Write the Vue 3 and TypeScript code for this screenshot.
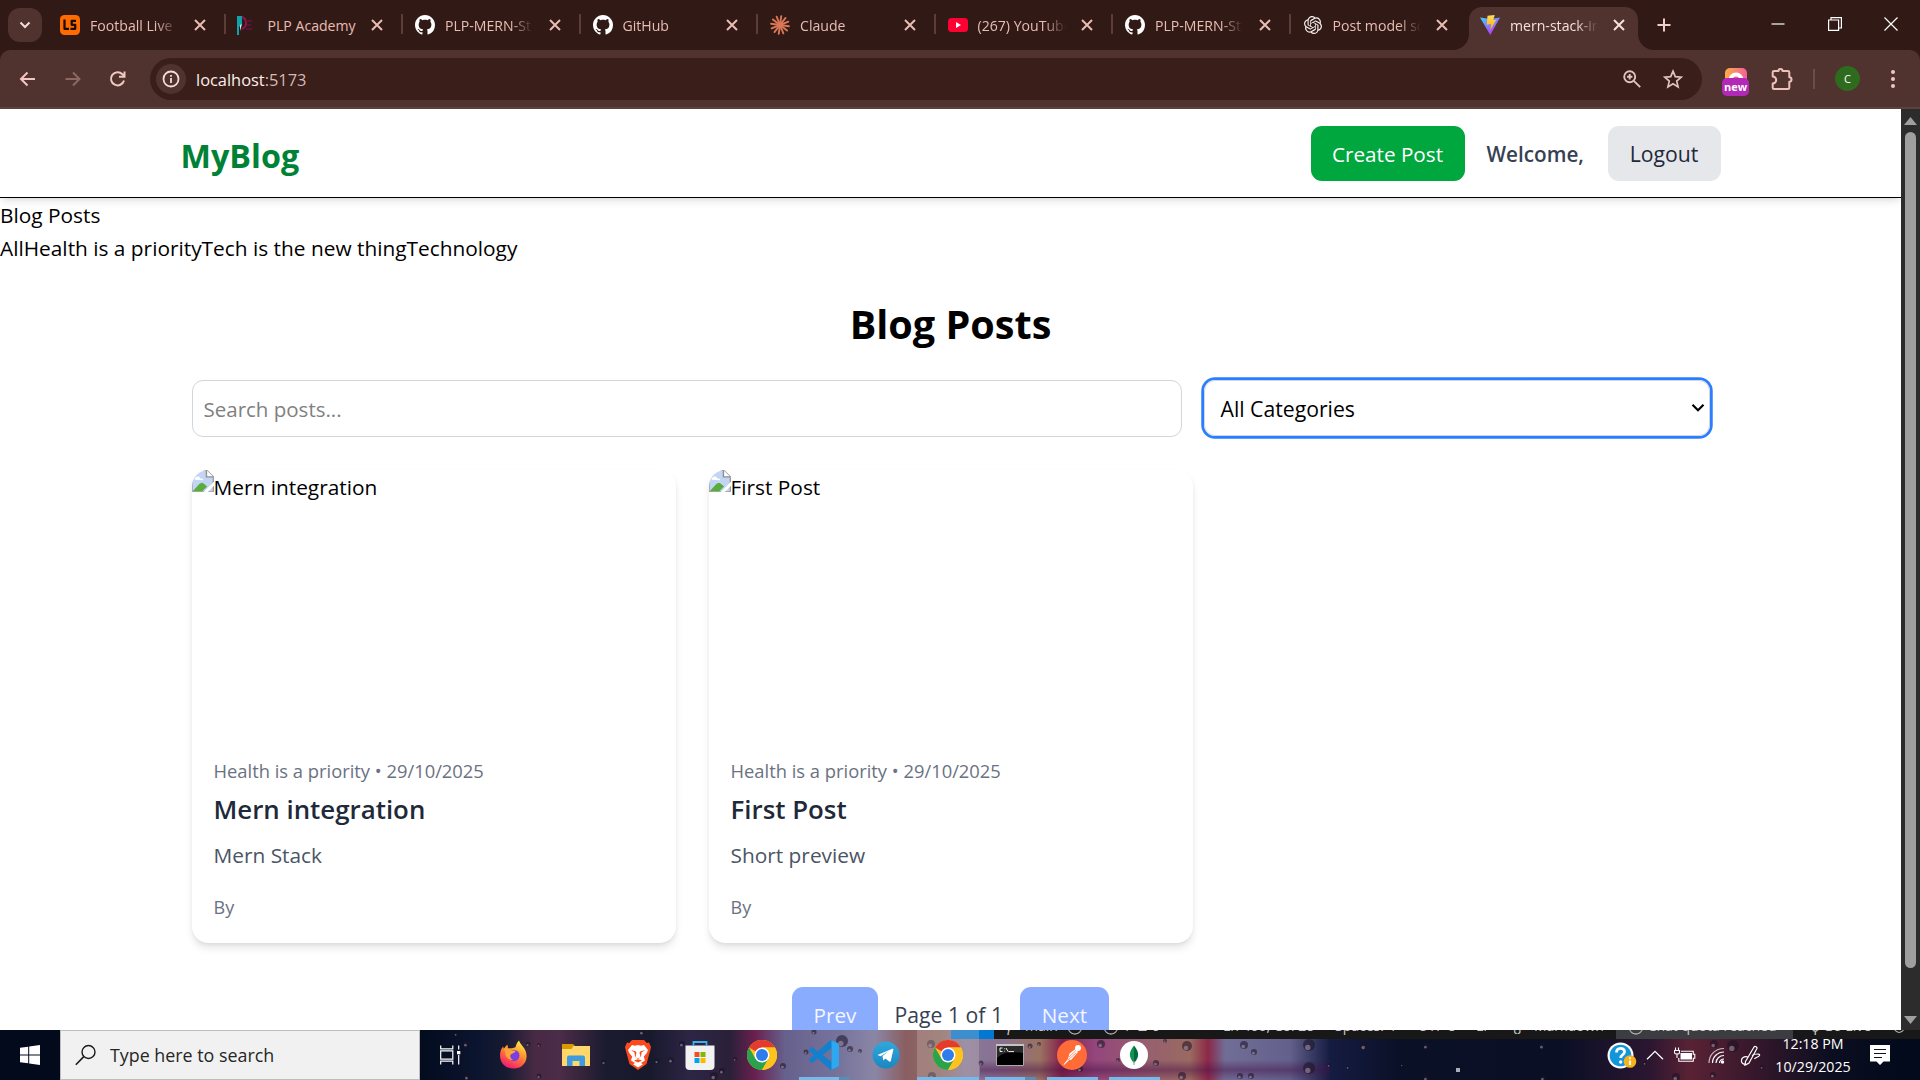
<script setup lang="ts">
interface Tab {
  icon: string
  title: string
  active?: boolean
}
interface Post {
  title: string
  category: string
  date: string
  excerpt: string
}
interface StatusItem {
  text: string
  width: number
  lit?: boolean
}
interface Dock {
  icon: string
  state?: 'open' | 'stacked' | 'current'
}

const tabs: Tab[] = [
  { icon: 'livescore', title: 'Football Live S' },
  { icon: 'plp', title: 'PLP Academy' },
  { icon: 'github', title: 'PLP-MERN-St' },
  { icon: 'github', title: 'GitHub' },
  { icon: 'claude', title: 'Claude' },
  { icon: 'youtube', title: '(267) YouTube' },
  { icon: 'github', title: 'PLP-MERN-St' },
  { icon: 'openai', title: 'Post model sch' },
  { icon: 'vite', title: 'mern-stack-int', active: true },
]

const posts: Post[] = [
  { title: 'Mern integration', category: 'Health is a priority', date: '29/10/2025', excerpt: 'Mern Stack' },
  { title: 'First Post', category: 'Health is a priority', date: '29/10/2025', excerpt: 'Short preview' },
]

const categories = ['All', 'Health is a priority', 'Tech is the new thing', 'Technology']

const statusItems: StatusItem[] = [
  { text: 'γ', width: 20 },
  { text: 'main', width: 42 },
  { text: '◯', width: 36 },
  { text: '◯ 1', width: 34 },
  { text: '⊔ 0', width: 86 },
  { text: 'Ln 406, Col 28', width: 112 },
  { text: 'Spaces: 4', width: 83 },
  { text: 'UTF-8', width: 58 },
  { text: 'LF', width: 36 },
  { text: '{}', width: 22 },
  { text: 'Markdown', width: 82 },
  { text: '◯ Chat quota reached', width: 177, lit: true },
  { text: '', width: 18 },
  { text: 'ϙ Go Live', width: 82 },
  { text: '◡', width: 20 },
]

const dock: Dock[] = [
  { icon: 'firefox' },
  { icon: 'explorer' },
  { icon: 'brave' },
  { icon: 'store' },
  { icon: 'chrome' },
  { icon: 'vscode', state: 'stacked' },
  { icon: 'telegram' },
  { icon: 'chrome', state: 'current' },
  { icon: 'cmd', state: 'stacked' },
  { icon: 'postman', state: 'open' },
  { icon: 'mongo', state: 'open' },
]

const rays = Array.from({ length: 12 }, (_, i) => i * 30 + 8)

/* Water drops scattered over the wallpaper: x, y, radius */
const drops: number[][] = [
  [456, 4, 2], [466, 14, 3], [467, 47, 3], [528, 14, 2.5], [539, 15, 2], [539, 46, 2.5], [604, 32, 2.5], [633, 14, 2],
  [642, 2, 3], [657, 31, 2.5], [671, 30, 3], [682, 14, 3], [714, 46, 4], [722, 41, 3], [735, 29, 2], [783, 36, 3],
  [806, 22, 2.5], [814, 2, 2.5], [842, 11, 6], [850, 19, 3], [860, 21, 2], [931, 14, 4], [932, 46, 4], [981, 33, 2.5],
  [1030, 16, 2.5], [1039, 14, 2], [1080, 39, 3], [1101, 14, 4], [1118, 30, 2], [1156, 33, 3], [1165, 11, 2], [1187, 16, 5],
  [1182, 46, 4], [1240, 46, 3], [1244, 15, 4], [1254, 22, 3], [1251, 46, 3], [1309, 15, 6], [1309, 38, 6], [1329, 35, 2],
  [1348, 37, 2], [1364, 16, 4], [1402, 35, 1.5], [1426, 16, 3], [1426, 48, 3], [1542, 16, 3], [1543, 48, 3], [1714, 14, 4],
  [1733, 16, 6], [1713, 45, 3], [1676, 47, 4], [1645, 33, 2], [1762, 37, 2],
]
</script>

<template>
  <div class="screen">
    <div class="strip">
      <div class="tab-search">
        <svg width="16" height="16" viewBox="0 0 16 16"><path d="M3.5 5.5 8 10l4.500-4.500" fill="none" stroke="#f3dcd7" stroke-width="2" /></svg>
      </div>
      <div v-for="(tab, i) in tabs" :key="i" class="tab" :class="{ active: tab.active, beforeactive: i === tabs.length - 2 }">
        <span class="favicon">
          <svg v-if="tab.icon === 'livescore'" width="20" height="20" viewBox="0 0 20 20">
            <rect width="20" height="20" rx="4.500" fill="#ff6b00" />
            <path d="M4.500 4.500v9.300H9M16 5.800h-4.300v4h3.500v4h-4.700" fill="none" stroke="#1b0d05" stroke-width="2.300" stroke-linejoin="round" />
          </svg>
          <svg v-else-if="tab.icon === 'plp'" width="20" height="20" viewBox="0 0 20 20">
            <path d="M0 1h5v8l-3 3v8L0 20z" fill="#0fa3ac" />
            <path d="M3 10 5 9l-2 7z" fill="#d9e8e8" />
            <path d="M5 2c5 2 6 9 0 12" fill="none" stroke="#8f1450" stroke-width="2" />
            <path d="M9 6h6M10 10h4M9 14h6" stroke="#5c1238" stroke-width="2" />
          </svg>
          <svg v-else-if="tab.icon === 'github'" width="20" height="20" viewBox="0 0 16 16">
            <path fill="#fff" d="M8 0C3.58 0 0 3.58 0 8c0 3.54 2.29 6.53 5.47 7.59.4.07.55-.17.55-.38 0-.19-.01-.82-.01-1.49-2.01.37-2.53-.49-2.69-.94-.09-.23-.48-.94-.82-1.13-.28-.15-.68-.52-.01-.53.63-.01 1.08.58 1.23.82.72 1.21 1.87.87 2.33.66.07-.52.28-.87.51-1.07-1.78-.2-3.64-.89-3.64-3.95 0-.87.31-1.59.82-2.15-.08-.2-.36-1.02.08-2.12 0 0 .67-.21 2.2.82.64-.18 1.32-.27 2-.27.68 0 1.36.09 2 .27 1.53-1.04 2.2-.82 2.2-.82.44 1.1.16 1.92.08 2.12.51.56.82 1.27.82 2.15 0 3.07-1.87 3.75-3.65 3.95.29.25.54.73.54 1.48 0 1.07-.01 1.93-.01 2.2 0 .21.15.46.55.38A8.013 8.013 0 0016 8c0-4.42-3.58-8-8-8z" />
          </svg>
          <svg v-else-if="tab.icon === 'claude'" width="20" height="20" viewBox="0 0 20 20">
            <g stroke="#d97757" stroke-width="1.900" stroke-linecap="round">
              <path v-for="r in rays" :key="r" d="M10 10V1" :transform="`rotate(${r} 10 10)`" />
            </g>
          </svg>
          <svg v-else-if="tab.icon === 'youtube'" width="20" height="20" viewBox="0 0 20 20">
            <rect y="3" width="20" height="14" rx="3.500" fill="#ff0033" />
            <path d="M8 7v6l5-3z" fill="#fff" />
          </svg>
          <svg v-else-if="tab.icon === 'openai'" width="18" height="18" viewBox="0 0 24 24">
            <path fill="#f4eeec" d="M22.2819 9.8211a5.9847 5.9847 0 0 0-.5157-4.9108 6.0462 6.0462 0 0 0-6.5098-2.9A6.0651 6.0651 0 0 0 4.9807 4.1818a5.9847 5.9847 0 0 0-3.9977 2.9 6.0462 6.0462 0 0 0 .7427 7.0966 5.98 5.98 0 0 0 .511 4.9107 6.051 6.051 0 0 0 6.5146 2.9001A5.9847 5.9847 0 0 0 13.2599 24a6.0557 6.0557 0 0 0 5.7718-4.2058 5.9894 5.9894 0 0 0 3.9977-2.9001 6.0557 6.0557 0 0 0-.7475-7.0729zm-9.022 12.6081a4.4755 4.4755 0 0 1-2.8764-1.0408l.1419-.0804 4.7783-2.7582a.7948.7948 0 0 0 .3927-.6813v-6.7369l2.02 1.1686a.071.071 0 0 1 .038.052v5.5826a4.504 4.504 0 0 1-4.4945 4.4944zm-9.6607-4.1254a4.4708 4.4708 0 0 1-.5346-3.0137l.142.0852 4.783 2.7582a.7712.7712 0 0 0 .7806 0l5.8428-3.3685v2.3324a.0804.0804 0 0 1-.0332.0615L9.74 19.9502a4.4992 4.4992 0 0 1-6.1408-1.6464zM2.3408 7.8956a4.485 4.485 0 0 1 2.3655-1.9728V11.6a.7664.7664 0 0 0 .3879.6765l5.8144 3.3543-2.0201 1.1685a.0757.0757 0 0 1-.071 0l-4.8303-2.7865A4.504 4.504 0 0 1 2.3408 7.872zm16.5963 3.8558L13.1038 8.364 15.1192 7.2a.0757.0757 0 0 1 .071 0l4.8303 2.7913a4.4944 4.4944 0 0 1-.6765 8.1042v-5.6772a.79.79 0 0 0-.407-.667zm2.0107-3.0231l-.142-.0852-4.7735-2.7818a.7759.7759 0 0 0-.7854 0L9.409 9.2297V6.8974a.0662.0662 0 0 1 .0284-.0615l4.8303-2.7866a4.4992 4.4992 0 0 1 6.6802 4.66zM8.3065 12.863l-2.02-1.1638a.0804.0804 0 0 1-.038-.0567V6.0742a4.4992 4.4992 0 0 1 7.3757-3.4537l-.142.0805L8.704 5.459a.7948.7948 0 0 0-.3927.6813zm1.0976-2.3654l2.602-1.4998 2.6069 1.4998v2.9994l-2.5974 1.4997-2.6067-1.4997Z" />
          </svg>
          <svg v-else width="20" height="20" viewBox="0 0 20 20">
            <defs>
              <linearGradient id="vg" x1="0" y1="0" x2=".6" y2="1"><stop offset="0" stop-color="#41d1ff" /><stop offset="1" stop-color="#bd34fe" /></linearGradient>
              <linearGradient id="vb" x1="0" y1="0" x2="0" y2="1"><stop offset="0" stop-color="#ffdf5c" /><stop offset="1" stop-color="#ffa800" /></linearGradient>
            </defs>
            <path d="M0 2.500 10 4l10-1.500L10.300 20z" fill="url(#vg)" />
            <path d="M7.500.8 14.700 0l-1.500 5.200 3-.5-5.800 10.500.6-6.200-4.200.8z" fill="url(#vb)" />
          </svg>
        </span>
        <span class="tab-title">{{ tab.title }}</span>
        <svg class="tab-close" width="14" height="14" viewBox="0 0 14 14"><path d="m2 2 10 10M12 2 2 12" stroke="currentColor" stroke-width="2" /></svg>
        <svg v-if="tab.active" class="flare left" width="16" height="16" viewBox="0 0 16 16"><path d="M16 0v16H0A16 16 0 0 0 16 0z" fill="#50332e" /></svg>
        <svg v-if="tab.active" class="flare right" width="16" height="16" viewBox="0 0 16 16"><path d="M0 0v16h16A16 16 0 0 1 0 0z" fill="#50332e" /></svg>
      </div>
      <svg class="new-tab" width="14" height="14" viewBox="0 0 14 14"><path d="M7 .5v13M.5 7h13" stroke="#f1cfc8" stroke-width="2" /></svg>
      <div class="window-buttons">
        <svg width="14" height="14" viewBox="0 0 14 14"><path d="M.5 7h13" stroke="#fff" stroke-width="1.200" /></svg>
        <svg width="14" height="14" viewBox="0 0 14 14"><path d="M.6 3h10v10.400H.6zM3 3V.6h10.400V11H10.600" fill="none" stroke="#fff" stroke-width="1.200" /></svg>
        <svg width="14" height="14" viewBox="0 0 14 14"><path d="m.5.500 13 13M13.500.500l-13 13" stroke="#fff" stroke-width="1.200" /></svg>
      </div>
    </div>

    <div class="toolbar">
      <div class="nav">
        <svg width="20" height="20" viewBox="0 0 20 20"><path d="M17 10H3M9.500 3.500 3 10l6.500 6.500" fill="none" stroke="#f1c7c0" stroke-width="2" /></svg>
        <svg width="20" height="20" viewBox="0 0 20 20"><path d="M2.500 10h14M10 3.500l6.500 6.500-6.500 6.500" fill="none" stroke="#8d6761" stroke-width="2" /></svg>
        <svg width="20" height="20" viewBox="0 0 20 20"><path d="M16 11.500A6.600 6.600 0 1 1 14.400 5.200L16 7M16.500 2.500v5.300H11" fill="none" stroke="#f1c7c0" stroke-width="2" /></svg>
      </div>
      <div class="omnibox">
        <span class="site-info">
          <svg width="18" height="18" viewBox="0 0 18 18"><circle cx="9" cy="9" r="7.500" fill="none" stroke="#f3dcd7" stroke-width="1.800" /><path d="M9 8v5M9 5v1.800" stroke="#f3dcd7" stroke-width="1.800" /></svg>
        </span>
        <span class="url"><b>localhost</b>:5173</span>
        <svg class="magnifier" width="20" height="20" viewBox="0 0 20 20"><circle cx="7.700" cy="7.700" r="5.500" fill="none" stroke="#dfc3bd" stroke-width="1.900" /><path d="m11.800 11.800 6.400 6.400M7.700 5v5.400M5 7.700h5.400" stroke="#dfc3bd" stroke-width="1.900" /></svg>
        <svg class="star" width="20" height="20" viewBox="0 0 20 20"><path d="m10 2.200 2.300 5.500 5.900.5-4.500 3.900 1.400 5.800L10 14.800l-5.100 3.100 1.400-5.800-4.500-3.900 5.900-.5z" fill="none" stroke="#dfc3bd" stroke-width="1.700" /></svg>
      </div>
      <div class="extension">
        <svg width="22" height="12" viewBox="0 0 22 12">
          <defs><linearGradient id="eg" x1="0" y1="0" x2="1" y2="0"><stop offset="0" stop-color="#fbb040" /><stop offset="1" stop-color="#f2609e" /></linearGradient></defs>
          <rect width="22" height="20" rx="5" fill="url(#eg)" /><path d="M3.500 12a7.500 7.500 0 0 1 15 0z" fill="#fff" /><path d="M7.500 12a3.500 3.500 0 0 1 7 0z" fill="#e96a86" />
        </svg>
        <span>new</span>
      </div>
      <svg class="puzzle" width="24" height="26" viewBox="0 0 24 26"><path d="M4 5h4.500a2 2 0 0 1 4 0H18q1.300 0 1.300 1.300V11.300a2.200 2.200 0 0 1 0 4.400V21.700q0 1.300-1.300 1.300H4q-1.300 0-1.300-1.300V17.500a3.500 3.500 0 0 0 0-7V6.300Q2.700 5 4 5z" fill="none" stroke="#edc2ba" stroke-width="2" stroke-linejoin="round" /></svg>
      <span class="divider"></span>
      <span class="avatar">C</span>
      <svg class="menu" width="6" height="24" viewBox="0 0 6 24"><g fill="#f1c7c0"><circle cx="3" cy="5" r="2" /><circle cx="3" cy="12" r="2" /><circle cx="3" cy="19" r="2" /></g></svg>
    </div>

    <div class="viewport">
      <div class="page">
        <header class="site-header">
          <div class="site-inner">
            <span class="brand">MyBlog</span>
            <button class="btn create">Create Post</button>
            <span class="welcome">Welcome,</span>
            <button class="btn logout">Logout</button>
          </div>
        </header>
        <div class="plain">Blog Posts</div>
        <div class="plain cats"><span v-for="c in categories" :key="c">{{ c }}</span></div>
        <main class="content">
          <h1>Blog Posts</h1>
          <div class="filters">
            <input class="search" type="text" placeholder="Search posts..." />
            <div class="select">
              <span>All Categories</span>
              <svg width="14" height="10" viewBox="0 0 14 10"><path d="m1.500 1.800 5.500 5.500 5.500-5.500" fill="none" stroke="#000" stroke-width="2.200" /></svg>
            </div>
          </div>
          <div class="grid">
            <article v-for="p in posts" :key="p.title" class="card">
              <div class="picture">
                <svg width="22" height="22" viewBox="0 0 16 16">
                  <path d="M1 0h9.500L15.500 5v11H0V1z" fill="#c3d5f5" stroke="#a0a0a0" />
                  <path d="M10.500 0v5h5" fill="#fff" stroke="#8e8e8e" />
                  <path d="M2 7c.2-2.500 3.500-3 4-.8C8 5.800 8.400 7 8 7.500z" fill="#fff" />
                  <path d="M.5 15.500 5 10.500c1.500-1.400 3-1.400 4.500.2L11 12l-3.500 3.500z" fill="#5aad3a" />
                  <path d="m8 16.500 8.500-8.500v3L11 16.500z" fill="#fff" />
                </svg><span>{{ p.title }}</span>
              </div>
              <div class="card-body">
                <p class="meta">{{ p.category }} • {{ p.date }}</p>
                <h2>{{ p.title }}</h2>
                <p class="excerpt">{{ p.excerpt }}</p>
                <p class="by">By</p>
              </div>
            </article>
          </div>
          <div class="pager">
            <button class="btn page-btn">Prev</button>
            <span class="page-label">Page 1 of 1</span>
            <button class="btn page-btn">Next</button>
          </div>
        </main>
      </div>
      <div class="scrollbar">
        <svg width="13" height="8" viewBox="0 0 13 8"><path d="M6.500 0 13 8H0z" fill="#9f9f9f" /></svg>
        <span class="thumb"></span>
        <svg class="down" width="13" height="8" viewBox="0 0 13 8"><path d="M0 0h13L6.500 8z" fill="#9f9f9f" /></svg>
      </div>
    </div>

    <div class="taskbar">
      <svg class="drops" width="1920" height="50" viewBox="0 0 1920 50">
        <g v-for="(d, i) in drops" :key="i">
          <circle :cx="d[0]" :cy="d[1]" :r="d[2]" fill="#1b1224" fill-opacity=".55" />
          <circle :cx="d[0] - d[2] * 0.2" :cy="d[1] + d[2] * 0.4" :r="d[2] * 0.45" fill="#b9a5bb" fill-opacity=".5" />
        </g>
        <rect x="1456" y="38" width="4" height="4" fill="#a9adb8" />
      </svg>
      <div class="status">
        <span class="remote"></span>
        <span v-for="(s, i) in statusItems" :key="i" class="status-item" :class="{ lit: s.lit }" :style="{ width: s.width + 'px' }">{{ s.text }}</span>
      </div>
      <div class="start">
        <svg width="20" height="20" viewBox="0 0 20 20"><path d="M0 2.800 8.200 1.700v7.700H0zM9.200 1.500 20 0v9.400H9.200zM0 10.400h8.200v7.900L0 17.200zM9.200 10.400H20V20L9.200 18.500z" fill="#fff" /></svg>
      </div>
      <div class="task-search">
        <svg width="22" height="22" viewBox="0 0 22 22"><circle cx="13.500" cy="8" r="6.500" fill="none" stroke="#1a1a1a" stroke-width="1.400" /><path d="m8.800 12.600-8 8.200" stroke="#1a1a1a" stroke-width="1.600" /></svg>
        <span>Type here to search</span>
      </div>
      <div class="cell taskview">
        <svg width="22" height="20" viewBox="0 0 22 20"><path d="M1.700.500v3.300h12.100V.500M1.700 19.500v-3.300h12.100v3.300M1.700 5.800h12.100v8.400H1.700zM19.700.500v4M19.700 10v9.500" fill="none" stroke="#fff" stroke-width="1.200" /><rect x="18" y="6" width="3.300" height="3.300" fill="#fff" /></svg>
      </div>
      <div v-for="(d, i) in dock" :key="i" class="cell" :class="d.state">
        <svg v-if="d.icon === 'firefox'" width="30" height="30" viewBox="0 0 30 30">
          <defs><linearGradient id="ff" x1=".8" y1="0" x2=".3" y2="1"><stop offset="0" stop-color="#fff44f" /><stop offset=".4" stop-color="#ff9a2e" /><stop offset=".75" stop-color="#ff4a4d" /><stop offset="1" stop-color="#e5197e" /></linearGradient></defs>
          <path d="M20 .5c.5 2.500 3 4.500 5 7.500 6 9 1 20.500-10 20.500S-.5 20 1.500 11.500C2 9.500 3 8 4 6.500l1 2.200c1-2 2-3 3.500-4l.5 3.500h4l3.500-1C17 5 18 2.500 20 .5z" fill="url(#ff)" />
          <circle cx="15" cy="15.500" r="5.500" fill="#7a3fe0" />
          <path d="M5 8.500c3-.5 5.500.5 7.500 2l4 .3c-.5 2.500-3.500 2.200-5 4.200-.8 2 .5 4 2.500 5-4 .5-8-3-7.500-7z" fill="#ffa436" />
        </svg>
        <svg v-else-if="d.icon === 'explorer'" width="28" height="24" viewBox="0 0 28 24">
          <path d="M0 1h11l3 3h-3L9 6H0z" fill="#d99a00" /><path d="M0 6h9l2.500-3H28v20H0z" fill="#ffd76b" /><path d="M5 23v-8.500a2 2 0 0 1 2-2h14a2 2 0 0 1 2 2V23h-5.500v-5h-7v5z" fill="#3d9be0" />
        </svg>
        <svg v-else-if="d.icon === 'brave'" width="26" height="30" viewBox="0 0 26 30">
          <path d="M7 0h12l2.800 3 2.200-.4L26 7l-.8 3.500L21.500 24 13 30 4.500 24 .8 10.500 0 7l2-4.400 2.200.4z" fill="#fb4a1d" />
          <path d="m7 5 3 .7 3-.8 3 .8L19 5l4 5-1.200 3-3 3.500 1.200 4-4 2.500 2 1.200-5 3.300-5-3.300 2-1.200-4-2.500 1.200-4-3-3.500L3 10z" fill="#fff" />
          <path d="m6 10 4.500 1.200 1 1.600-1.200 4.400 2.700 1 2.700-1-1.200-4.400 1-1.600L20 10l-3.500 2.500-.5 4.500-3 2-3-2-.5-4.500zM9 20.500l4-1.200 4 1.200-4 2z" fill="#fb4a1d" />
        </svg>
        <svg v-else-if="d.icon === 'store'" width="30" height="30" viewBox="0 0 30 30">
          <path d="M.5 5.500h29V26a4 4 0 0 1-4 4h-21a4 4 0 0 1-4-4z" fill="#f2f2f2" /><path d="M8.500 6V2h13v4" fill="none" stroke="#35b1ee" stroke-width="1.800" />
          <path d="M9.500 12h5v5h-5z" fill="#f04e24" /><path d="M15.500 12h5v5h-5z" fill="#80b900" /><path d="M9.500 18h5v5h-5z" fill="#00a3ee" /><path d="M15.500 18h5v5h-5z" fill="#ffb800" />
        </svg>
        <svg v-else-if="d.icon === 'chrome'" width="30" height="30" viewBox="0 0 30 30">
          <circle cx="15" cy="15" r="15" fill="#fcc31e" />
          <path d="M15 15 2 7.500A15 15 0 0 1 28 7.500H15z" fill="#e33b2e" />
          <path d="M2 7.500A15 15 0 0 0 15 30l6.500-11.200L8.500 18.700z" fill="#2ba24c" />
          <path d="M15 7.500h13A15 15 0 0 1 15 30l6.500-11.200z" fill="#fcc31e" />
          <circle cx="15" cy="15" r="7.500" fill="#fff" /><circle cx="15" cy="15" r="6" fill="#2f7ded" />
        </svg>
        <svg v-else-if="d.icon === 'vscode'" width="30" height="30" viewBox="0 0 24 24">
          <path fill="#1280cc" d="M23.15 2.587L18.21.21a1.494 1.494 0 0 0-1.705.29l-9.46 8.63-4.12-3.128a.999.999 0 0 0-1.276.057L.327 7.261A1 1 0 0 0 .326 8.74L3.899 12 .326 15.26a1 1 0 0 0 .001 1.479L1.65 17.94a.999.999 0 0 0 1.276.057l4.12-3.128 9.46 8.63a1.492 1.492 0 0 0 1.704.29l4.942-2.377A1.5 1.5 0 0 0 24 20.060V3.939a1.5 1.5 0 0 0-.85-1.352zm-5.146 14.861L10.826 12l7.178-5.448v10.896z" />
          <path fill="#2fa8f2" d="M18.004.2l5.146 2.387A1.500 1.500 0 0 1 24 3.940v16.120a1.500 1.500 0 0 1-.85 1.352L18.004 23.800z" />
        </svg>
        <svg v-else-if="d.icon === 'telegram'" width="28" height="28" viewBox="0 0 28 28">
          <defs><linearGradient id="tg" x1="0" y1="0" x2="0" y2="1"><stop offset="0" stop-color="#2fa8de" /><stop offset="1" stop-color="#1c86c0" /></linearGradient></defs>
          <circle cx="14" cy="14" r="13.500" fill="url(#tg)" /><path d="m5.500 14 14.800-6.200c.8-.2 1.200.2 1 1L18.800 20c-.2.800-.8 1-1.500.6l-4-3-2 2-.8-4.500L17 10l-8.500 5.200z" fill="#fff" />
        </svg>
        <svg v-else-if="d.icon === 'cmd'" width="28" height="22" viewBox="0 0 28 22">
          <path d="M.5.500h27v21H.5z" fill="#000" stroke="#a9a9a9" /><path d="M0 0h28v2H0z" fill="#c4c4c4" /><path d="M1 14c7-7 17-6 26-5V2H1z" fill="#2b2b2b" />
          <path d="M6.500 4H4v3.500h2.500M8.500 4.500v.6M8.500 6.800v.6M10 4l2 3.500M12.500 7.600H18" fill="none" stroke="#eee" stroke-width="1" />
        </svg>
        <svg v-else-if="d.icon === 'postman'" width="30" height="30" viewBox="0 0 30 30">
          <circle cx="15" cy="15" r="15" fill="#ff6c37" /><circle cx="21" cy="8" r="3" fill="#fff" /><path d="m18.500 9 2.500 3-7 8-1.500-.3-5.500 5.300-.5-.5 4.500-5.500 1.500-5.500z" fill="#fff" /><path d="m12 17 7-6.500M11 20l8-7" stroke="#ff6c37" stroke-width=".7" />
        </svg>
        <svg v-else width="28" height="28" viewBox="0 0 28 28">
          <circle cx="14" cy="14" r="14" fill="#fff" /><path d="M14 4.500c-5.500 6.500-5.500 12 0 17.500z" fill="#12924f" /><path d="M14 4.500c5.500 6.500 5.500 12 0 17.500z" fill="#016a43" /><path d="M14 20v4" stroke="#9aa8a0" stroke-width="1.200" />
        </svg>
        <span v-if="d.state" class="underline"></span>
      </div>
      <div class="tray">
        <svg class="help" width="30" height="28" viewBox="0 0 30 28">
          <circle cx="13.500" cy="13.500" r="13" fill="#fff" /><circle cx="13.500" cy="13.500" r="10.800" fill="#1296db" />
          <path d="M9.500 10.500c0-5.500 8-5.300 8-.7 0 3-3.800 3-3.800 6.200" fill="none" stroke="#fff" stroke-width="2.800" /><circle cx="13.700" cy="20" r="1.700" fill="#fff" />
          <circle cx="23" cy="19.500" r="6.300" fill="#f5b21c" /><path d="M23 18.500v4.500M23 15.300v1.800" stroke="#fff" stroke-width="1.800" />
        </svg>
        <svg class="up" width="18" height="10" viewBox="0 0 18 10"><path d="m1 9.300 8-8 8 8" fill="none" stroke="#fff" stroke-width="1.300" /></svg>
        <svg class="battery" width="22" height="16" viewBox="0 0 22 16"><path d="M6.500 6h11.500v6.500H6.500z" fill="#fff" /><path d="M7 4.300h12.300v3h1.500v4h-1.500v3H4.800V11M1.500.500v3M4.500.500v3M.5 3.500h5v2c0 2-5 2-5 0zM3 7v4" fill="none" stroke="#fff" stroke-width="1.100" /></svg>
        <svg class="wifi" width="17" height="17" viewBox="0 0 17 17"><g fill="none" stroke="#fff" stroke-width="1.200"><path d="M1 16C1 7.500 7.500 1.500 16 1.500" opacity=".7" /><path d="M4.500 16C4.500 10 9.500 5 16 5" /><path d="M8 16c0-4 3.500-7.500 8-7.500" /><path d="M11.500 16c0-2.200 2-4 4.500-4" /></g><circle cx="14.500" cy="15" r="1.700" fill="#fff" /></svg>
        <svg class="pen" width="21" height="21" viewBox="0 0 21 21"><path d="M5.500 16.500 14 2c1-1.500 3.700 0 2.800 1.800L9 18l-4 2.200zM8 12c-4-1-7 1-6.500 4.500S7.500 20 9 18M12 10.500c3-2 8.500-2 7.500 0-1 1.500-4.500 2-5 3.500" fill="none" stroke="#fff" stroke-width="1.200" /></svg>
        <div class="clock"><span>12:18 PM</span><span>10/29/2025</span></div>
        <svg class="notes" width="20" height="20" viewBox="0 0 20 20"><path d="M0 0h20v16.500h-6.500L10 20l-3.500-3.500H0z" fill="#fff" /><path d="M4 4.500h12M4 8.500h12M4 12.500h8" stroke="#0a1224" stroke-width="1.100" /></svg>
      </div>
    </div>
  </div>
</template>

<style>
body {
  margin: 0;
  overflow: hidden;
}
</style>

<style scoped>
* {
  box-sizing: border-box;
}
.screen {
  width: 1920px;
  height: 1080px;
  display: flex;
  flex-direction: column;
  overflow: hidden;
  background: #321a16;
  font-family: 'Open Sans', 'Noto Sans', sans-serif;
}
svg {
  display: block;
  flex: none;
}
p,
h1,
h2 {
  margin: 0;
}

/* Tab strip */
.strip {
  height: 50px;
  flex: none;
  display: flex;
  align-items: flex-start;
  background: #311a15;
}
.tab-search {
  width: 34px;
  height: 34px;
  margin: 8px 5px 0 8px;
  border-radius: 12px;
  background: #50332e;
  display: flex;
  align-items: center;
  justify-content: center;
}
.tab {
  position: relative;
  width: 177.500px;
  height: 36px;
  margin-top: 7px;
  display: flex;
  align-items: center;
  padding-left: 13px;
  color: #e9bcb4;
}
.tab:nth-child(3) .favicon {
  margin-left: -1px;
  margin-right: 1px;
}
.tab:not(.active):not(.beforeactive)::after {
  content: '';
  position: absolute;
  right: -1px;
  top: 7px;
  width: 2px;
  height: 20px;
  background: #5c3d37;
}
.tab.active {
  width: 169px;
  height: 43px;
  margin-left: 2px;
  padding: 0 0 7px 11px;
  background: #50332e;
  border-radius: 13px 13px 0 0;
  color: #f6e0dc;
}
.favicon {
  width: 20px;
  height: 20px;
  display: flex;
  align-items: center;
  justify-content: center;
}
.tab-title {
  width: 90px;
  margin-left: 10px;
  padding-top: 1px;
  font-size: 14.100px;
  line-height: 20px;
  white-space: nowrap;
  overflow: hidden;
  mask-image: linear-gradient(90deg, #000 66px, transparent 88px);
}
.tab:nth-child(3) .tab-title {
  mask-image: none;
}
.tab-close {
  margin-left: 12.500px;
}
.tab.active .tab-close {
  margin-left: 12px;
}
.flare {
  position: absolute;
  bottom: 0;
}
.flare.left {
  left: -16px;
}
.flare.right {
  right: -16px;
}
.new-tab {
  margin: 18px 0 0 19px;
}
.window-buttons {
  margin: 17px 22px 0 auto;
  display: flex;
  gap: 42.500px;
}

/* Toolbar */
.toolbar {
  height: 59px;
  flex: none;
  display: flex;
  align-items: center;
  background: #50332e;
  border-radius: 10px 10px 0 0;
  border-bottom: 2px solid #5a423e;
  padding-left: 18px;
}
.nav {
  width: 132px;
  display: flex;
  gap: 25px;
}
.omnibox {
  width: 1552px;
  height: 42px;
  border-radius: 21px;
  background: #391e1a;
  display: flex;
  align-items: center;
  padding-left: 6px;
}
.site-info {
  width: 30px;
  height: 30px;
  border-radius: 50%;
  background: #50332e;
  display: flex;
  align-items: center;
  justify-content: center;
}
.url {
  margin-left: 10px;
  padding-top: 1px;
  font-size: 16.400px;
  color: #d6bab5;
}
.url b {
  font-weight: 400;
  color: #fbeeeb;
}
.magnifier {
  margin-left: auto;
}
.star {
  margin: 0 19.500px 0 20.500px;
}
.extension {
  margin-left: 20px;
  width: 27px;
  display: flex;
  flex-direction: column;
  align-items: center;
  padding-top: 6px;
}
.extension span {
  width: 27px;
  height: 18px;
  border-radius: 5px;
  background: #b129b6;
  color: #fff;
  font-size: 11px;
  font-weight: 700;
  line-height: 18px;
  text-align: center;
  margin-top: -2px;
}
.puzzle {
  margin-left: 20.500px;
}
.divider {
  width: 2px;
  height: 20px;
  margin-left: 19.500px;
  background: #6f4d47;
}
.avatar {
  width: 25px;
  height: 25px;
  margin-left: 20px;
  border-radius: 50%;
  background: #2f6b1e;
  color: #fff;
  font-size: 11px;
  line-height: 25px;
  text-align: center;
}
.menu {
  margin-left: 29.500px;
}

/* Web page */
.viewport {
  height: 921px;
  flex: none;
  display: flex;
}
.page {
  width: 1901px;
  height: 921px;
  overflow: hidden;
  background: #fff;
  color: #000;
  font-size: 20.850px;
}
.site-header {
  height: 89px;
  border-bottom: 1px solid #000;
  box-shadow: 0 5.500px 8.250px -1.400px rgba(0, 0, 0, 0.1), 0 2.750px 5.500px -2.750px rgba(0, 0, 0, 0.1);
}
.site-inner {
  width: 1540px;
  height: 88px;
  margin: 0 auto;
  display: flex;
  align-items: center;
  gap: 22px;
}
.brand {
  margin-right: auto;
  padding-top: 3px;
  font-size: 32.300px;
  font-weight: 700;
  color: #008236;
}
.btn {
  height: 55px;
  padding: 1px 0 0;
  border: 0;
  border-radius: 11px;
  font-family: inherit;
  font-size: 20.700px;
}
.create {
  width: 154px;
  background: #00a63e;
  color: #fff;
}
.welcome {
  width: 99px;
  padding-top: 1px;
  font-size: 20.700px;
  font-weight: 600;
  color: #364153;
}
.logout {
  width: 113px;
  font-size: 21.200px;
  background: #e5e7eb;
  color: #1e2939;
}
.plain {
  height: 33px;
  line-height: 34px;
  white-space: nowrap;
}
.content {
  width: 1518px;
  margin: 0 auto;
}
h1 {
  margin-top: 35px;
  line-height: 50px;
  font-size: 39.600px;
  font-weight: 700;
  text-align: center;
}
.filters {
  display: flex;
  gap: 22px;
  margin-top: 31px;
}
.search {
  width: 990px;
  height: 57px;
  padding: 0 11px;
  border: 1px solid #d1d5dc;
  border-radius: 11px;
  font-family: inherit;
  font-size: 20.500px;
  outline: none;
}
.search::placeholder {
  color: #808080;
}
.select {
  width: 506px;
  height: 56px;
  border: 1px solid #d1d5dc;
  border-radius: 11px;
  box-shadow: 0 0 0 2.750px #2b7fff;
  display: flex;
  align-items: center;
  justify-content: space-between;
  padding: 0 4px 0 16px;
  font-size: 21.200px;
}
.grid {
  display: grid;
  grid-template-columns: repeat(3, 484px);
  gap: 33px;
  margin-top: 33px;
}
.card {
  height: 473px;
  border-radius: 16.500px;
  overflow: hidden;
  background: #fff;
  box-shadow: 0 5.500px 8.250px -1.400px rgba(0, 0, 0, 0.1), 0 2.750px 5.500px -2.750px rgba(0, 0, 0, 0.1);
}
.picture {
  height: 264px;
  display: flex;
  align-items: flex-start;
  line-height: 34px;
}
.card-body {
  padding: 23px 22px 22px;
}
.meta,
.by {
  font-size: 18.350px;
  line-height: 27.500px;
  color: #6a7282;
}
h2 {
  margin-top: 5.500px;
  font-size: 25.850px;
  font-weight: 600;
  line-height: 38.500px;
  color: #1e2939;
}
.excerpt {
  margin-top: 10px;
  line-height: 33px;
  color: #4a5565;
}
.by {
  margin-top: 22px;
  font-size: 18px;
}
.pager {
  display: flex;
  justify-content: center;
  align-items: center;
  gap: 16.500px;
  margin-top: 44px;
}
.page-btn {
  width: 86px;
  background: #8aacff;
  color: #f3f6ff;
}
.page-btn:last-child {
  width: 89px;
}
.page-label {
  width: 109px;
  font-size: 21.200px;
  white-space: nowrap;
  color: #364153;
}
.scrollbar {
  width: 19px;
  height: 921px;
  background: #2c2c2c;
  display: flex;
  flex-direction: column;
  align-items: center;
  padding-top: 8px;
}
.thumb {
  width: 11px;
  height: 836px;
  margin-top: 7px;
  border-radius: 6px;
  background: #9f9f9f;
}
.down {
  margin-top: 48px;
}

/* Taskbar */
.taskbar {
  position: relative;
  height: 50px;
  flex: none;
  display: flex;
  background:
    linear-gradient(180deg, transparent 60%, rgba(70, 15, 70, 0.45) 80%, transparent 100%) 980px 0 / 350px 50px no-repeat,
    linear-gradient(90deg, #020a1b 0, #030b1e 420px, #0c1530 480px, #161a30 505px, #482a45 535px, #4c2c48 560px, #1b1b2f 605px, #18192d 650px, #2d2545 690px, #2a2038 730px, #6a2050 755px, #66618c 785px, #77749c 840px, #8a86a6 875px, #8a5f62 905px, #8c6a66 940px, #857a9c 965px, #8a7090 1000px, #9a7262 1040px, #851f4c 1062px, #94467c 1095px, #97606e 1150px, #9a6a60 1190px, #8c2848 1208px, #706d96 1225px, #63608c 1290px, #151c42 1330px, #0a1026 1400px, #0a0f26 1560px, #2b1630 1650px, #5a2234 1690px, #38182c 1750px, #0c0e20 1830px, #020a1b 1900px);
}
.drops {
  position: absolute;
  left: 0;
  top: 0;
}
.status {
  position: absolute;
  left: 951px;
  top: 0;
  width: 969px;
  height: 9px;
  overflow: hidden;
  display: flex;
  background: #181818;
}
.remote {
  width: 43px;
  flex: none;
  background: #0078d4;
  margin-right: 11px;
}
.status-item {
  flex: none;
  height: 9px;
  font-size: 14px;
  line-height: 20px;
  white-space: nowrap;
  color: #ccc;
  display: flex;
  align-items: flex-end;
  padding-bottom: 3px;
}
.status-item.lit {
  background: #3b3d41;
  padding-left: 12px;
}
.start {
  position: relative;
  width: 60px;
  display: flex;
  align-items: center;
  justify-content: center;
}
.task-search {
  position: relative;
  width: 360px;
  border: 1px solid #bdbdbd;
  background: #f1f1f1;
  display: flex;
  align-items: center;
  gap: 13px;
  padding-left: 14px;
  font-size: 17.850px;
  color: #262626;
}
.cell {
  position: relative;
  width: 62px;
  display: flex;
  align-items: center;
  justify-content: center;
}
.cell.taskview {
  width: 63px;
  padding-right: 3px;
}
.cell.current {
  background: rgba(220, 200, 190, 0.28);
}
.underline {
  position: absolute;
  left: 6px;
  bottom: 0;
  width: 51px;
  height: 3px;
  background: #76b9ed;
}
.stacked .underline {
  background: linear-gradient(90deg, #76b9ed 40px, #5b8cb5 40px);
}
.current .underline {
  left: 0;
  width: 62px;
}
.tray {
  position: relative;
  margin-left: 441.500px;
  display: flex;
  align-items: center;
  color: #fff;
}
.help {
  margin-top: 2px;
}
.up {
  margin-left: 9.500px;
}
.battery {
  margin-left: 10px;
}
.wifi {
  margin-left: 12px;
}
.pen {
  margin-left: 15px;
}
.clock {
  width: 90px;
  margin-left: 7px;
  display: flex;
  flex-direction: column;
  align-items: center;
  font-size: 14.200px;
  line-height: 23px;
  white-space: nowrap;
}
.notes {
  margin-left: 12px;
}
</style>
